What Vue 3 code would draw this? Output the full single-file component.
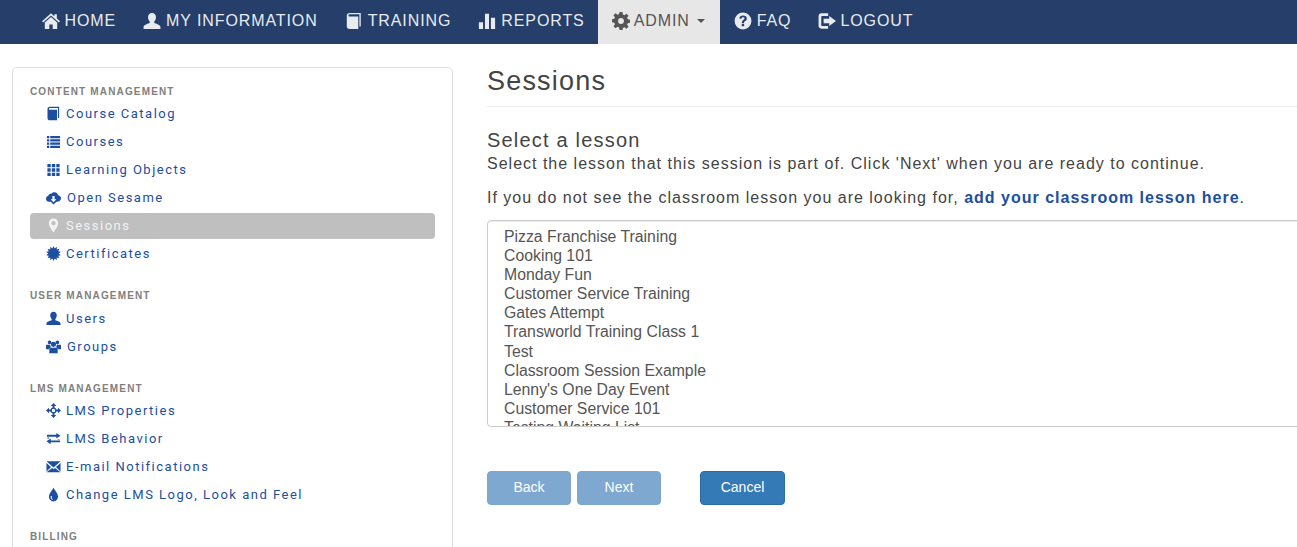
<template>
  <div class="page">
    <nav class="navbar">
      <a v-for="item in navItems" :key="item.label" class="nav-link" :class="{ active: item.active }" href="#">
        <svg class="nav-icon" viewBox="0 0 16 16"><path :d="icons[item.icon]" fill-rule="evenodd" /></svg>
        <span>{{ item.label }}</span>
        <i v-if="item.active" class="caret"></i>
      </a>
    </nav>

    <div class="layout">
      <aside class="sidebar">
        <section v-for="group in groups" :key="group.title" class="side-group" :class="group.cls">
          <h5>{{ group.title }}</h5>
          <a v-for="link in group.links" :key="link.label" class="side-link" :class="{ current: link.current, wide: link.wide }" href="#">
            <svg class="side-icon" viewBox="0 0 16 16"><path :d="icons[link.icon]" fill-rule="evenodd" /></svg>
            <span>{{ link.label }}</span>
          </a>
        </section>
      </aside>

      <main class="content">
        <h1>Sessions</h1>
        <h2>Select a lesson</h2>
        <p class="intro">Select the lesson that this session is part of. Click 'Next' when you are ready to continue.</p>
        <p class="hint">If you do not see the classroom lesson you are looking for, <a href="#">add your classroom lesson here</a>.</p>
        <select class="lessons" multiple>
          <option v-for="lesson in lessons" :key="lesson">{{ lesson }}</option>
        </select>
        <div class="actions">
          <button class="btn disabled">Back</button>
          <button class="btn disabled">Next</button>
          <button class="btn cancel">Cancel</button>
        </div>
      </main>
    </div>
  </div>
</template>

<script setup>
// spiky ball for the certificate icon
const spikes = 14
let badge = ''
for (let i = 0; i < spikes * 2; i++) {
  const r = i % 2 ? 5.6 : 8
  const a = (Math.PI * i) / spikes
  badge += (i ? 'L' : 'M') + (8 + r * Math.sin(a)).toFixed(2) + ' ' + (8 - r * Math.cos(a)).toFixed(2)
}
badge += 'Z'

const icons = {
  home: 'M8 1 0 8.200l1 1.100L8 3l7 6.300 1-1.100-2.800-2.500V2h-2.200v1.700L8 1ZM8 4.400 2.500 9.300V15h4v-4h3v4h4V9.300L8 4.400Z',
  user: 'M8 .8c2.200 0 3.500 1.600 3.500 3.800 0 1.500-.6 3-1.500 3.900v1.300c1.500.7 5.500 1.400 5.500 3.600V15H.5v-1.600c0-2.200 4-2.900 5.500-3.600V8.500C5.100 7.600 4.500 6.100 4.500 4.600 4.500 2.400 5.800.8 8 .8Z',
  book: 'M4.200 .8h9.800v12h-1.200V2H4.400C3.600 2 3.100 2.500 3.100 3.100c0 .5.500 .9 1.300 .9h7.400v11.200H4.200C2.500 15.200 1.600 14.200 1.600 12.700V3.200C1.600 1.800 2.700 .8 4.200 .8Z',
  chart: 'M.8 9h3.700v6H.8V9ZM6.200 1.500h3.600V15H6.200V1.500ZM11.500 5H15.200v10h-3.700V5Z',
  cog: 'M6.700 0h2.600l.4 2.200 1.300.6L12.900 1.500l1.800 1.800-1.300 1.900.6 1.300 2 .4v2.600l-2 .4-.6 1.300 1.300 1.900-1.800 1.800-1.900-1.300-1.300.6L9.300 16H6.700l-.4-2.200-1.300-.6-1.900 1.300-1.800-1.800 1.300-1.900-.6-1.300-2-.4V6.500l2-.4.6-1.300L1.300 2.900 3.100 1.100 5 2.400l1.300-.6L6.700 0ZM8 5.400a2.600 2.600 0 1 0 0 5.200 2.600 2.600 0 0 0 0-5.200Z',
  question: 'M8 .5a7.500 7.500 0 1 0 0 15A7.500 7.500 0 0 0 8 .5ZM8 3c2 0 3.400 1 3.400 2.800 0 1.400-.8 2-1.600 2.500-.7.4-.9.700-.9 1.400H7c0-1.500.4-2.100 1.300-2.700.7-.5 1.100-.7 1.100-1.400 0-.7-.6-1-1.300-1-.8 0-1.400.4-1.500 1.300L4.700 5.700C4.900 4 6.100 3 8 3ZM6.900 10.500h2.100v2.200H6.900v-2.200Z',
  logout: 'M3 1.200h6v2.300H3.600c-.4 0-.7.300-.7.700v7.600c0 .4.300.7.700.7H9v2.300H3C1.500 14.800.5 13.800.5 12.300V3.700C.5 2.200 1.500 1.200 3 1.200ZM10 3.500 16 8l-6 4.500V10H5V6h5V3.500Z',
  list: 'M1 2h2.500v2.500H1V2ZM4.500 2H15v2.500H4.500V2ZM1 5.500h2.500V8H1V5.500ZM4.500 5.500H15V8H4.500V5.500ZM1 9h2.500v2.500H1V9ZM4.500 9H15v2.500H4.500V9ZM1 12.500h2.500V15H1v-2.500ZM4.500 12.500H15V15H4.500v-2.500Z',
  grid: 'M1.500 2h3.500v3.500H1.500V2ZM6.200 2h3.600v3.500H6.200V2ZM11 2h3.500v3.500H11V2ZM1.500 6.700h3.500v3.600H1.500V6.700ZM6.200 6.700h3.600v3.600H6.200V6.700ZM11 6.700h3.500v3.600H11V6.700ZM1.500 11.500h3.500V15H1.500v-3.500ZM6.200 11.500h3.600V15H6.200v-3.500ZM11 11.500h3.500V15H11v-3.500Z',
  cloud: 'M9 2.500c2 0 3.500 1.300 3.900 3.100 1.700.2 3.100 1.500 3.100 3.300 0 1.900-1.500 3.600-3.500 3.600h-1.400L8 15.500 5 12.500H3.300C1.400 12.500 0 11 0 9.200c0-1.500 1-2.800 2.500-3.200C3 4.500 4.300 3.900 5.400 4.200 6.200 3.100 7.500 2.500 9 2.500ZM6.800 6.500v3.300H4.900L8 13l3.100-3.200H9.200V6.500H6.800Z',
  pin: 'M8 .5c3 0 5 2.200 5 4.900C13 8.900 9.700 12.800 8 15.500 6.300 12.800 3 8.900 3 5.400 3 2.700 5 .5 8 .5ZM8 3.200a2.300 2.300 0 1 0 0 4.600 2.300 2.300 0 0 0 0-4.600Z',
  badge,
  group: 'M3.800 1.500a2 2 0 1 1 0 4 2 2 0 0 1 0-4ZM12.200 1.500a2 2 0 1 1 0 4 2 2 0 0 1 0-4ZM8 3a2.700 2.700 0 1 1 0 5.400A2.700 2.700 0 0 1 8 3ZM1 6h3c.3 0 .4.100.6.300-.1.900.3 1.800 1 2.400C4.500 9 3.500 9.800 3 11H0V7.200C0 6.500.4 6 1 6ZM12 6h3c.6 0 1 .5 1 1.200V11h-3c-.5-1.200-1.500-2-2.600-2.300.7-.6 1.100-1.500 1-2.400.2-.2.300-.3.600-.3ZM5.500 9.300h5c1.200 0 2 1 2 2.200V15.200h-9v-3.700c0-1.200.8-2.200 2-2.200Z',
  move: 'M8 0l3 3.200H9v1.700A3.200 3.200 0 0 1 11.100 7h1.700V5l3.200 3-3.200 3V9h-1.700A3.200 3.200 0 0 1 9 11.100v1.700h2L8 16l-3-3.200h2v-1.700A3.200 3.200 0 0 1 4.900 9H3.200v2L0 8l3.200-3v2h1.700A3.200 3.200 0 0 1 7 4.900V3.200H5L8 0ZM8 6.200a1.800 1.800 0 1 0 0 3.600 1.800 1.800 0 0 0 0-3.600Z',
  transfer: 'M11 2l4.500 3L11 8V6H1V4h10V2ZM5 8v2h10v2H5v2L.5 11 5 8ZM1.500 7h2v1h-2V7ZM12.500 9h2v.7h-2V9Z',
  envelope: 'M.5 2.500h15L8 9 .5 2.500ZM.5 4.200 5.400 8.500.5 13.200V4.200ZM15.500 4.200v9L10.600 8.500l4.900-4.300ZM6.500 9.500 8 10.800l1.500-1.300 6 4.500H.5l6-4.500Z',
  tint: 'M8 .5c.8 3 4.800 5.700 4.800 9.700C12.800 13 10.600 15.500 8 15.500S3.200 13 3.200 10.200C3.200 6.200 7.200 3.500 8 .5ZM5 9.500c-.4 2 .8 4 2.600 4.300-1-1-1.500-2.500-1.500-4.300H5Z',
}

const navItems = [
  { label: 'HOME', icon: 'home' },
  { label: 'MY INFORMATION', icon: 'user' },
  { label: 'TRAINING', icon: 'book' },
  { label: 'REPORTS', icon: 'chart' },
  { label: 'ADMIN', icon: 'cog', active: true },
  { label: 'FAQ', icon: 'question' },
  { label: 'LOGOUT', icon: 'logout' },
]

const groups = [
  {
    title: 'CONTENT MANAGEMENT',
    links: [
      { label: 'Course Catalog', icon: 'book' },
      { label: 'Courses', icon: 'list' },
      { label: 'Learning Objects', icon: 'grid' },
      { label: 'Open Sesame', icon: 'cloud', wide: true },
      { label: 'Sessions', icon: 'pin', current: true },
      { label: 'Certificates', icon: 'badge' },
    ],
  },
  {
    title: 'USER MANAGEMENT',
    cls: 'users',
    links: [
      { label: 'Users', icon: 'user' },
      { label: 'Groups', icon: 'group', wide: true },
    ],
  },
  {
    title: 'LMS MANAGEMENT',
    links: [
      { label: 'LMS Properties', icon: 'move' },
      { label: 'LMS Behavior', icon: 'transfer' },
      { label: 'E-mail Notifications', icon: 'envelope' },
      { label: 'Change LMS Logo, Look and Feel', icon: 'tint' },
    ],
  },
  { title: 'BILLING', links: [] },
]

const lessons = [
  'Pizza Franchise Training',
  'Cooking 101',
  'Monday Fun',
  'Customer Service Training',
  'Gates Attempt',
  'Transworld Training Class 1',
  'Test',
  'Classroom Session Example',
  "Lenny's One Day Event",
  'Customer Service 101',
  'Testing Waiting List',
  'Another Session',
]
</script>

<style>
html, body {
  margin: 0;
  height: 547px;
  overflow: hidden;
  background: #fff;
}
</style>

<style scoped>
.page {
  width: 1297px;
  height: 547px;
  overflow: hidden;
  font-family: "Liberation Sans", Arial, sans-serif;
  color: #444;
}
.navbar {
  display: flex;
  height: 44px;
  padding-left: 28px;
  background: #253e6a;
}
.nav-link {
  display: flex;
  align-items: center;
  gap: 5px;
  padding: 0 13.5px 2px;
  color: #e8ecf0;
  font-size: 16px;
  letter-spacing: 0.9px;
  text-decoration: none;
  white-space: nowrap;
}
.nav-link:last-child {
  gap: 4px;
}
.nav-link.active {
  gap: 4px;
  padding-right: 15.5px;
  background: #e7e7e7;
  color: #555;
}
.nav-icon {
  width: 18px;
  height: 18px;
  flex: none;
  fill: currentColor;
}
.caret {
  width: 0;
  height: 0;
  margin-left: 3px;
  border-top: 4px solid currentColor;
  border-left: 4px solid transparent;
  border-right: 4px solid transparent;
}
.layout {
  display: flex;
  align-items: flex-start;
  gap: 34px;
  padding: 23px 0 0 12px;
}
.sidebar {
  flex: none;
  box-sizing: border-box;
  width: 441px;
  height: 520px;
  padding: 16px 17px 0;
  border: 1px solid #ddd;
  border-radius: 5px;
}
.side-group {
  margin-bottom: 21px;
}
.side-group h5 {
  margin: 0;
  height: 14px;
  line-height: 16px;
  color: #808080;
  font-size: 10px;
  font-weight: 700;
  letter-spacing: 1.15px;
}
.side-group.users h5 {
  height: 15px;
}
.side-link {
  display: flex;
  align-items: center;
  gap: 5px;
  box-sizing: border-box;
  height: 26px;
  margin-top: 2px;
  padding: 0 0 2px 16px;
  border-radius: 4px;
  color: #1c4ea1;
  font-family: Roboto, "Liberation Sans", sans-serif;
  font-size: 13px;
  letter-spacing: 1.5px;
  text-decoration: none;
  white-space: nowrap;
}
.side-link:first-of-type {
  margin-top: 3px;
}
.side-link.wide {
  gap: 6px;
}
.side-link.current {
  background: #bfbfbf;
  color: #f2f2f2;
}
.side-icon {
  width: 15px;
  height: 15px;
  flex: none;
  fill: currentColor;
}
.content {
  flex: none;
  width: 840px;
}
.content h1 {
  margin: 0;
  padding: 0 0 11px;
  border-bottom: 1px solid #eee;
  font-size: 27px;
  font-weight: 400;
  line-height: 28px;
  letter-spacing: 1.2px;
}
.content h2 {
  margin: 21px 0 1px;
  font-size: 20px;
  font-weight: 400;
  line-height: 24px;
  letter-spacing: 1.2px;
}
.intro, .hint {
  margin: 0;
  font-size: 16px;
  line-height: 22px;
  letter-spacing: 1px;
}
.hint {
  margin-top: 12px;
}
.hint a {
  color: #1c4ea1;
  font-weight: 700;
  text-decoration: none;
}
.lessons {
  display: block;
  box-sizing: border-box;
  width: 100%;
  height: 207px;
  margin-top: 11px;
  padding: 7px 14px 0;
  border: 1px solid #ccc;
  border-radius: 4px;
  outline: none;
  color: #555;
  font-family: inherit;
  font-size: 15.8px;
  box-shadow: inset 0 1px 1px rgba(0, 0, 0, 0.075);
}
.lessons option {
  min-height: 18.1px;
  height: 18.1px;
  line-height: 18.1px;
}
.actions {
  display: flex;
  gap: 6px;
  margin-top: 44px;
}
.btn {
  width: 84px;
  height: 34px;
  padding: 0 0 2px;
  border: 1px solid #2e6da4;
  border-radius: 4px;
  background: #337ab7;
  color: #fff;
  font-family: inherit;
  font-size: 14px;
}
.btn.disabled {
  border-color: #7ba7d0;
  background: #7ea8d0;
}
.btn.cancel {
  width: 85px;
  margin-left: 33px;
}
</style>
